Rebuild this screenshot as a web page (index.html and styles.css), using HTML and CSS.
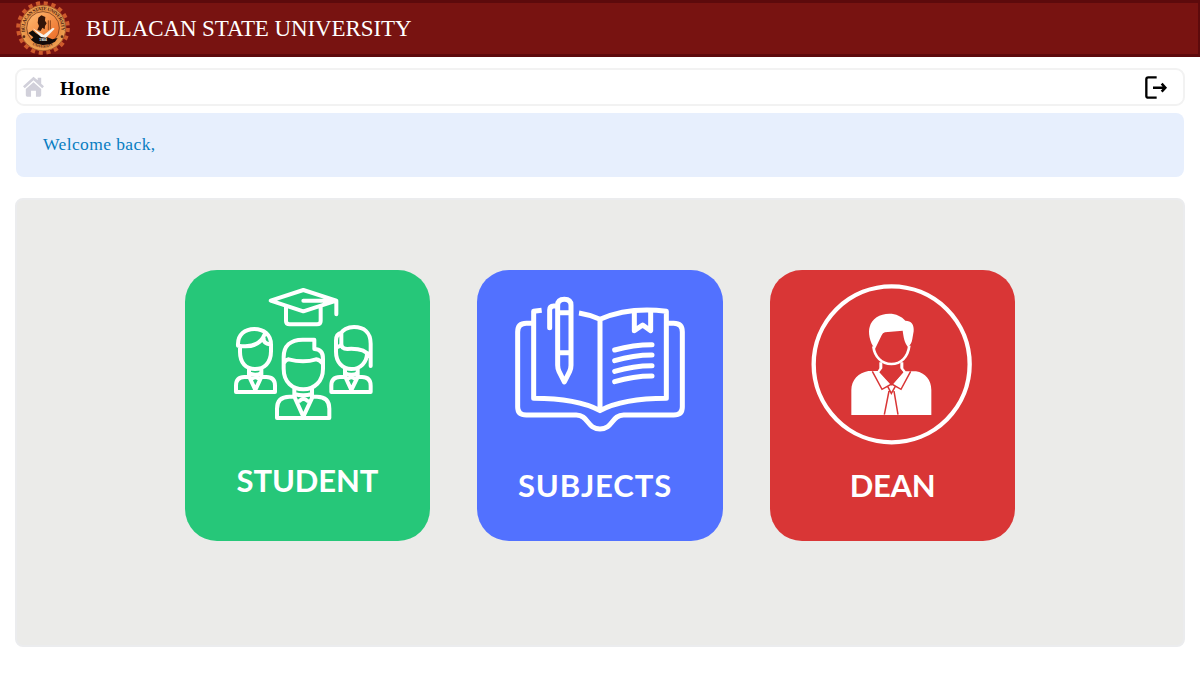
FILE: index.html
```html
<!DOCTYPE html>
<html lang="en">
<head>
<meta charset="utf-8">
<title>Bulacan State University</title>
<link rel="stylesheet" href="styles.css">
</head>
<body>
<header class="topbar">
  <svg class="seal" viewBox="0 0 162 162">
    <defs>
      <radialGradient id="gold"><stop offset="0" stop-color="#f7a14f"/><stop offset="0.65" stop-color="#e98a3f"/><stop offset="1" stop-color="#eda254"/></radialGradient>
      <linearGradient id="disc" x1="0" y1="0" x2="1" y2="1"><stop offset="0" stop-color="#ffbd72"/><stop offset="1" stop-color="#ea6420"/></linearGradient>
      <path id="arcTop" d="M27 93A55 55 0 1 1 135 93"/>
      <path id="arcBottom" d="M38 123A63 63 0 0 0 124 123"/>
    </defs>
    <circle cx="81" cy="81" r="73" fill="none" stroke="#cf5a2c" stroke-width="15" stroke-dasharray="12 10.93"/>
    <circle cx="81" cy="81" r="70" fill="#c75b2b"/>
    <circle cx="81" cy="81" r="68" fill="url(#gold)" stroke="#7d3a1b" stroke-width="1.5"/>
    <circle cx="81" cy="81" r="49" fill="url(#disc)" stroke="#5d2c18" stroke-width="2"/>
    <text class="seal-text"><textPath href="#arcTop" textLength="190">BULACAN STATE UNIVERSITY</textPath></text>
    <text class="seal-text seal-text-small"><textPath href="#arcBottom" startOffset="14" textLength="66">UNIVERSITY</textPath></text>
    <circle cx="24" cy="107" r="4" fill="#5d2c18"/><circle cx="138" cy="107" r="4" fill="#5d2c18"/>
    <path d="M67 50l9-7 12 5-1 11 5 8-5 8-1 10-7-5-5 10-10-3 5-12-4-10z" fill="#341509"/>
    <path d="M97 58v29M103 58v27" stroke="#8f451b" stroke-width="3"/>
    <path d="M37 96l13-8 10 9 18 11 16 1 15 6 16-4-8 11-15 8-22 2-22-5-13-11 7-7z" fill="#120b09"/>
    <path d="M50 82l33 20 28-22 5 3-26 27-15-2z" fill="#f5f2ed"/>
    <text class="seal-year" x="70" y="121">1904</text>
  </svg>
  <h1 class="brand">BULACAN STATE UNIVERSITY</h1>
</header>
<main class="page">
  <nav class="crumbs">
    <svg class="home" viewBox="0 0 60 60" fill="#d1d0da">
      <path d="M0 29L30 2l12 10V5h10v17l8 7-5 6L30 12 5 35z"/>
      <path d="M30 18L52 37v18q0 4-4 4H37V42H23v17H12q-4 0-4-4V37z"/>
    </svg>
    <span class="crumb">Home</span>
    <svg class="logout" viewBox="0 0 72 72">
      <path d="M38 7H13q-6 0-6 6v50q0 5 6 5h25" fill="none" stroke="#000" stroke-width="7"/>
      <path d="M27 38h36M53 26l11 12-11 12" fill="none" stroke="#000" stroke-width="7.5"/>
    </svg>
  </nav>
  <section class="welcome"><span class="welcome-text">Welcome back,</span></section>
  <section class="panel">
    <a class="card card-student">
      <svg class="icon-student" viewBox="0 0 480 450">
        <path d="M137 62L235 30l99 32-99 32zM334 62v41M235 62h99M183 80v43q0 10 11 10h82q11 0 11-10V80"/>
        <path d="M39 197c-2-34 22-50 49-50 28 0 50 17 50 47v20c0 35-21 53-48 53s-45-18-45-51v-15M39 197c35 6 67-1 80-34M116 176q-2 13 20 18"/>
        <path d="M72 266v24M109 266v24M72 280q18 8 37 0M72 291H58q-25 0-25 26v19h117v-19q0-26-26-26h-14M73 291l18 39 18-39M82 295q9-6 18 0"/>
        <path d="M268 207v-28h-35c-37 0-57 20-57 52v35c0 40 26 62 59 62s59-24 59-62v-30q0-29-26-29M177 249q4-9 14-11 45 12 82 0 12 2 18 11"/>
        <path d="M208 327v25M261 327v25M208 342q27 8 53 0M207 350h-14q-37 0-37 36v28h157v-28q0-36-37-36h-14M209 352l26 58 27-58M224 362q11-10 23 0"/>
        <path d="M437 258v-67c0-34-20-50-50-50-21 0-34 11-38 17-10 2-16 11-16 24v33c0 32 20 52 46 52 27 0 47-20 47-47M349 158v34c0 11 8 15 18 15 30-2 57 5 67 22M333 203q8-1 16-9"/>
        <path d="M360 266v24M398 266v24M360 280q19 8 38 0M361 291h-16q-26 0-26 26v19h118v-19q0-26-26-26h-14M361 291l18 39 19-39M370 295q9-6 18 0"/>
      </svg>
      <span class="card-label">STUDENT</span>
    </a>
    <a class="card card-subjects">
      <svg class="icon-subjects" viewBox="0 0 570 465">
        <path d="M110 76l-24 3v261q130 0 199 37 69-37 199-37V79q-112-14-199 24-30-14-63-19M285 103v274" stroke-linecap="butt"/>
        <path d="M85 115H64q-26 0-26 26v225q0 24 26 24h150c36 0 32 42 71 42s35-42 71-42h150q26 0 26-24V141q0-26-26-26h-20"/>
        <path d="M158 61q0-18 20-18t20 18v180q0 10-4 18l-16 32-16-32q-4-8-4-18zM158 83h40M158 203h40M134 128V75q0-12 12-12h10"/>
        <path d="M388 79v58l25-17 24 17V79M329 195q56-16 112-16M329 227q56-17 112-17M329 259q56-17 112-17M329 290q56-17 112-17"/>
      </svg>
      <span class="card-label">SUBJECTS</span>
    </a>
    <a class="card card-dean">
      <svg class="icon-dean" viewBox="0 0 540 540">
        <circle cx="275" cy="268" r="234" fill="none" stroke="#fff" stroke-width="13"/>
        <path d="M225 222c-17-20-21-52-16-66 6-25 30-40 59-40 20 0 37 8 48 21 18 0 27 12 25 32l-4 23c-2 12-6 18-13 24-11-14-13-28-16-49l-53 5q-7 1-10 9z" fill="#fff"/>
        <path d="M220 214c4 32 25 53 54 53s50-21 54-55" fill="none" stroke="#fff" stroke-width="8"/>
        <path d="M238 262h9v18l-9 12 37 40 35-40-9-12v-18h9v18l7 9h31c28 5 46 26 46 56v75H154v-75c0-30 22-52 51-57h28l5-8z" fill="#fff"/>
        <path d="M217 289l29 54 29-16-33-37M332 289l-29 54-28-16 33-37M263 334l11 21 12-21M267 348l-14 71M282 348l12 71" fill="none" stroke="#d93636" stroke-width="4.5"/>
      </svg>
      <span class="card-label">DEAN</span>
    </a>
  </section>
</main>
</body>
</html>
```
FILE: styles.css
```css
* { box-sizing: border-box; }
body { margin: 0; height: 675px; background: #fff; font-family: "Liberation Serif", serif; overflow: hidden; }
.topbar { display: flex; align-items: center; height: 57px; padding-left: 14px; background: #781311; border: solid #5d0a0c; border-width: 3px 2px 3px 0; }
.seal { width: 54px; height: 54px; margin: 0 16px 1px 2px; flex: none; }
.seal-text { font: bold 15px "Liberation Serif", serif; fill: #4a2013; }
.seal-text-small { font-size: 11px; }
.seal-year { font: bold 10px "Liberation Sans", sans-serif; fill: #fff; }
.brand { margin: 0; font-size: 23px; line-height: 26px; font-weight: 400; color: #fff; letter-spacing: -0.1px; white-space: nowrap; }
.page { padding: 11px 15px 0; }
.crumbs { display: flex; align-items: center; height: 38px; padding: 0 15px 0 6px; border: 2.5px solid #f2f2f2; border-radius: 9px; }
.home { width: 21px; height: 21px; margin-bottom: 2px; }
.crumb { margin: 3px auto 0 16px; font-size: 19px; line-height: 22px; font-weight: 700; letter-spacing: 0.5px; }
.logout { width: 24px; height: 24px; }
.welcome { display: flex; align-items: center; height: 64px; margin: 7px 1px 21px; padding: 0 0 1px 27px; background: #e7effd; border-radius: 8px; }
.welcome-text { color: #087dc1; font-size: 17.5px; letter-spacing: 0.4px; }
.panel { display: flex; justify-content: center; align-items: flex-start; gap: 47px; height: 449px; padding-top: 69.5px; background: #ebebe9; border: 2px solid #ebecee; border-radius: 8px; }
.card { display: flex; flex-direction: column; align-items: center; width: 245.6px; height: 271px; border-radius: 32px; }
.card-student { background: #26c779; }
.card-subjects { background: #5271ff; }
.card-dean { background: #d93636; }
.icon-student, .icon-subjects { fill: none; stroke: #fff; stroke-width: 12; stroke-linecap: round; stroke-linejoin: round; flex: none; }
.icon-student { width: 160px; height: 150px; margin: 10px 5px 0 0; }
.icon-subjects { width: 190px; height: 155px; margin-top: 15.5px; stroke-width: 15; }
.icon-dean { width: 180px; height: 180px; margin: 5.5px 5px 0 0; flex: none; }
.card-label { font: 700 31px/38px Lato, sans-serif; color: #fff; }
.card-student .card-label { margin-top: 31.5px; letter-spacing: -0.1px; }
.card-subjects .card-label { margin: 25.5px 10px 0 0; letter-spacing: 0.9px; }
.card-dean .card-label { margin-top: 10.5px; letter-spacing: -0.3px; }
```
